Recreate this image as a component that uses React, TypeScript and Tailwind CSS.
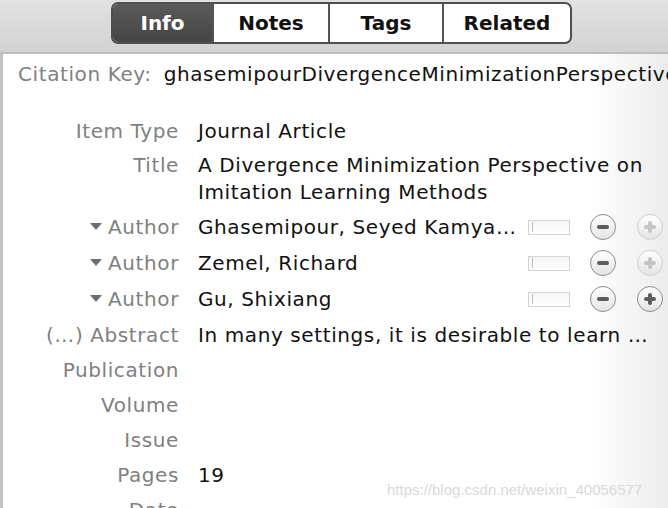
import React from 'react';

const tabs = [
  { name: 'Info', w: 'w-[99px]', active: true },
  { name: 'Notes', w: 'w-[116px]', active: false },
  { name: 'Tags', w: 'w-[114px]', active: false },
  { name: 'Related', w: 'w-[128px]', active: false },
];

const authors = [
  { name: 'Ghasemipour, Seyed Kamyar Seyed', plusOn: false },
  { name: 'Zemel, Richard', plusOn: false },
  { name: 'Gu, Shixiang', plusOn: true },
];

const RoundButton = ({ kind, faded }: { kind: 'minus' | 'plus'; faded?: boolean }) => (
  <div
    className={`flex h-[26px] w-[26px] items-center justify-center rounded-full border bg-linear-to-b from-white to-[#e4e4e4] ${
      faded ? 'border-[#cfcfcf]' : 'border-[#8c8c8c]'
    }`}
  >
    <svg width="14" height="14" viewBox="0 0 14 14">
      <rect x="1" y="5" width="12" height="4" rx="2" fill={faded ? '#c4c4c4' : '#5e5e5e'} />
      {kind === 'plus' && <rect x="5" y="1" width="4" height="12" rx="2" fill={faded ? '#c4c4c4' : '#5e5e5e'} />}
    </svg>
  </div>
);

const Label = ({ children }: { children: React.ReactNode }) => (
  <div className="text-right text-[#808080]">{children}</div>
);

export default function App() {
  return (
    <div className="relative h-[508px] w-[668px] overflow-hidden bg-white font-['DejaVu_Sans',sans-serif] text-[20px] leading-[27px] tracking-[0.6px]">
      {/* toolbar */}
      <div className="flex h-[54px] items-start border-b-2 border-[#bdbdbd] bg-linear-to-b from-[#e2e2e2] to-[#d2d2d2] pl-[111px] pt-[2px]">
        <div className="flex h-[42px] overflow-hidden rounded-[7px] border-2 border-[#4f4f4f] bg-white tracking-normal">
          {tabs.map((t, i) => (
            <div
              key={t.name}
              className={`flex items-center justify-center font-bold ${t.w} ${i > 0 ? 'border-l-2 border-[#555]' : ''} ${
                t.active ? 'bg-linear-to-b from-[#5a5a5a] to-[#454545] text-white' : 'text-[#111]'
              }`}
            >
              {t.name}
            </div>
          ))}
        </div>
      </div>

      {/* body */}
      <div className="h-full border-l-[3px] border-[#c2c2c2] bg-linear-to-r from-white from-[88%] to-[#ececec]">
        <div className="flex pl-[15px] pt-[7px] whitespace-nowrap">
          <span className="text-[#808080]">Citation Key:</span>
          <span className="ml-[12px] text-[#111]">ghasemipourDivergenceMinimizationPerspective2019</span>
        </div>

        <div className="mt-[26px] grid grid-cols-[176px_1fr] gap-x-[19px] pr-[13px]">
          <div className="pt-[4px] pb-[3px]"><Label>Item Type</Label></div>
          <div className="pt-[4px] pb-[3px] text-[#111]">Journal Article</div>

          <div className="pt-[4px] pb-[3px]"><Label>Title</Label></div>
          <div className="pt-[4px] pb-[3px] text-[#111]">A Divergence Minimization Perspective on Imitation Learning Methods</div>

          {authors.map((a) => (
            <React.Fragment key={a.name}>
              <div className="flex h-[36px] items-center justify-end">
                <svg width="12" height="8" viewBox="0 0 12 8" className="mr-[6px]">
                  <path d="M0 0 H12 L6 7 Z" fill="#6e6e6e" />
                </svg>
                <span className="text-[#808080]">Author</span>
              </div>
              <div className="flex h-[36px] items-center">
                <span className="w-[318px] truncate text-[#111]">{a.name}</span>
                <div className="ml-[12px] flex h-[15px] w-[42px] items-center border border-[#d4d4d4] bg-linear-to-b from-[#f4f4f4] to-white pl-[3px]">
                  <div className="h-[10px] w-px bg-[#bcbcbc]" />
                </div>
                <div className="ml-[20px]"><RoundButton kind="minus" /></div>
                <div className="ml-[21px]"><RoundButton kind="plus" faded={!a.plusOn} /></div>
              </div>
            </React.Fragment>
          ))}

          <div className="pt-[5px] pb-[4px]"><Label>(…) Abstract</Label></div>
          <div className="truncate whitespace-nowrap pt-[5px] pb-[4px] text-[#111]">
            In many settings, it is desirable to learn …
          </div>

          <div className="py-[4px]"><Label>Publication</Label></div>
          <div className="py-[4px]" />

          <div className="py-[4px]"><Label>Volume</Label></div>
          <div className="py-[4px]" />

          <div className="py-[4px]"><Label>Issue</Label></div>
          <div className="py-[4px]" />

          <div className="py-[4px]"><Label>Pages</Label></div>
          <div className="py-[4px] text-[#111]">19</div>

          <div className="py-[4px]"><Label>Date</Label></div>
          <div className="py-[4px]" />
        </div>
      </div>

      {/* watermark */}
      <div className="absolute left-[387px] top-[480px] font-['Liberation_Sans',sans-serif] text-[15px] leading-[20px] tracking-normal text-[#d9d9d9]">
        https://blog.csdn.net/weixin_40056577
      </div>
    </div>
  );
}
